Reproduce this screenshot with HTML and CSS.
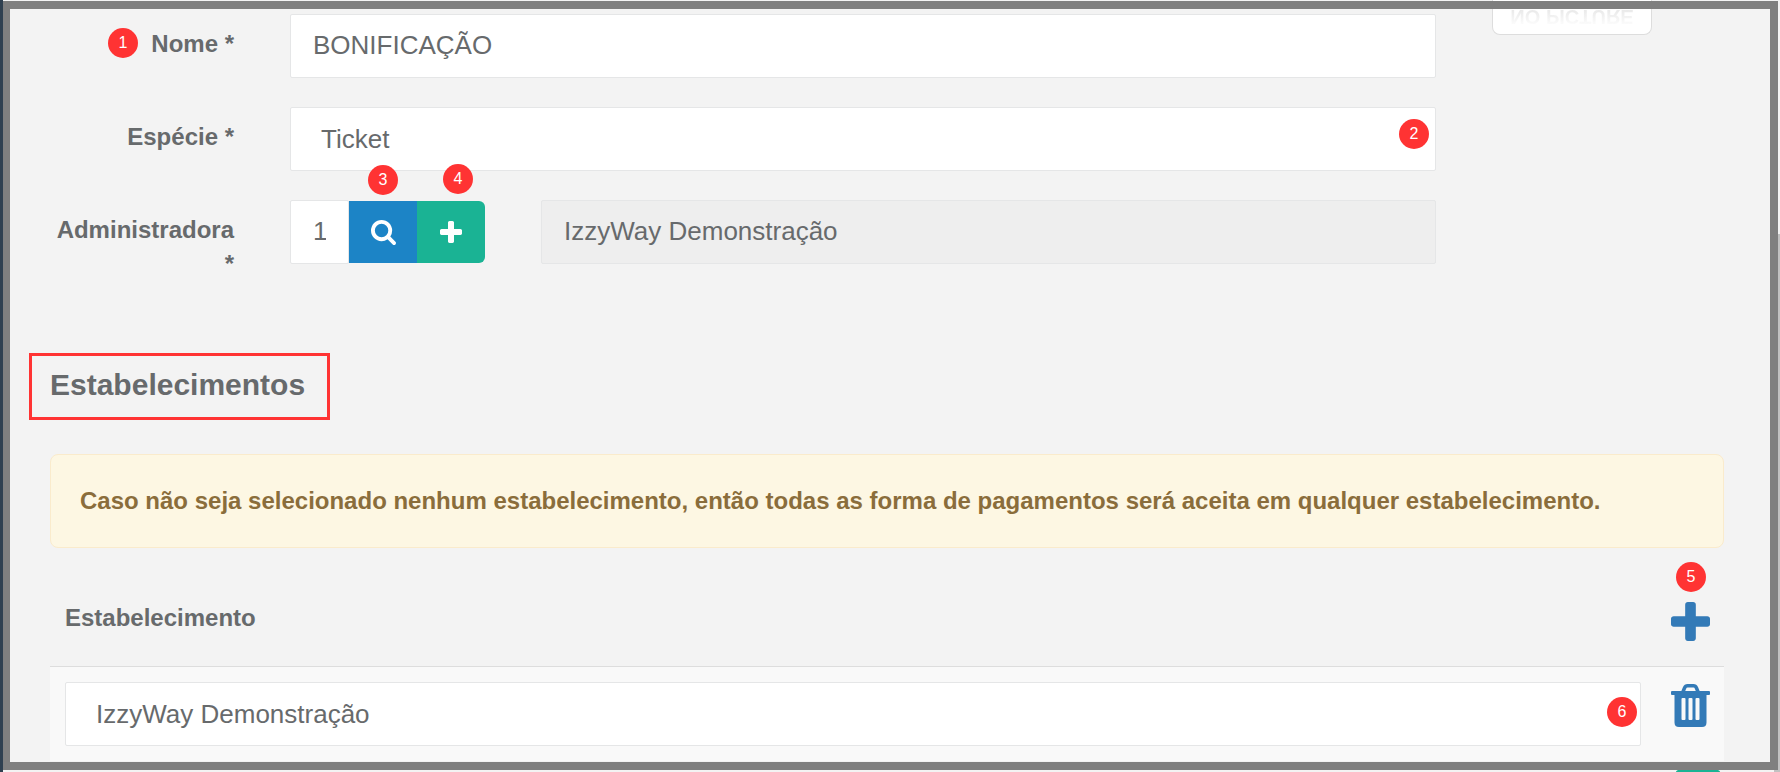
FILE: index.html
```
<!DOCTYPE html>
<html lang="pt-BR">
<head>
  <meta charset="UTF-8">
  <meta name="viewport" content="width=device-width, initial-scale=1.0">
  <title>Forma de Pagamento</title>
  <link rel="stylesheet" href="styles.css">
</head>
<body>
  <main class="page">
    <form class="form-layout">
      <div class="form-fields">
        <div class="form-row">
          <label class="form-label" for="nome"><span class="marker marker-nome">1</span>Nome *</label>
          <input class="form-control" id="nome" type="text" value="BONIFICAÇÃO">
        </div>

        <div class="form-row">
          <label class="form-label" for="especie">Espécie *</label>
          <div class="field">
            <select class="form-control" id="especie">
              <option>Ticket</option>
            </select>
            <span class="marker marker-especie">2</span>
          </div>
        </div>

        <div class="form-row">
          <label class="form-label" for="administradora">Administradora *</label>
          <div class="admin-fields">
            <div class="input-group">
              <input class="form-control" id="administradora" type="text" value="1">
              <button class="btn btn-search" type="button" aria-label="Pesquisar">
                <svg width="25" height="25" viewBox="0 0 1664 1664" aria-hidden="true"><path fill="currentColor" d="M1152 704q0-185-131.500-316.500T704 256 387.500 387.500 256 704t131.500 316.500T704 1152t316.500-131.500T1152 704zm512 832q0 52-38 90t-90 38q-54 0-90-38l-343-342q-179 124-399 124-143 0-273.500-55.500t-225-150-150-225T0 704t55.500-273.500 150-225 225-150T704 0t273.500 55.500 225 150 150 225T1408 704q0 220-124 399l343 343q37 37 37 90z"/></svg>
                <span class="marker marker-search">3</span>
              </button>
              <button class="btn btn-add" type="button" aria-label="Adicionar">
                <svg width="22" height="22" viewBox="0 0 1408 1408" aria-hidden="true"><path fill="currentColor" d="M1408 608v192q0 40-28 68t-68 28H896v416q0 40-28 68t-68 28H608q-40 0-68-28t-28-68V896H96q-40 0-68-28T0 800V608q0-40 28-68t68-28h416V96q0-40 28-68t68-28h192q40 0 68 28t28 68v416h416q40 0 68 28t28 68z"/></svg>
                <span class="marker marker-add">4</span>
              </button>
            </div>
            <input class="form-control" type="text" value="IzzyWay Demonstração" aria-label="Nome da administradora" readonly>
          </div>
        </div>
      </div>

      <div class="thumbnail"><span class="reflection">NO PICTURE</span></div>
    </form>

    <h2 class="section-title">Estabelecimentos</h2>

    <div class="alert">Caso não seja selecionado nenhum estabelecimento, então todas as forma de pagamentos será aceita em qualquer estabelecimento.</div>

    <table class="table">
      <thead>
        <tr>
          <th scope="col">Estabelecimento</th>
          <th class="action" scope="col">
            <button class="icon-btn" type="button" aria-label="Adicionar estabelecimento">
              <svg width="39" height="39" viewBox="0 0 1408 1408" aria-hidden="true"><path fill="currentColor" d="M1408 608v192q0 40-28 68t-68 28H896v416q0 40-28 68t-68 28H608q-40 0-68-28t-28-68V896H96q-40 0-68-28T0 800V608q0-40 28-68t68-28h416V96q0-40 28-68t68-28h192q40 0 68 28t28 68v416h416q40 0 68 28t28 68z"/></svg>
              <span class="marker marker-plus">5</span>
            </button>
          </th>
        </tr>
      </thead>
      <tbody>
        <tr>
          <td>
            <div class="field">
              <select class="form-control" aria-label="Estabelecimento">
                <option>IzzyWay Demonstração</option>
              </select>
              <span class="marker marker-estab">6</span>
            </div>
          </td>
          <td class="action">
            <button class="icon-btn" type="button" aria-label="Remover estabelecimento">
              <svg width="39" height="43" viewBox="0 0 39 43" aria-hidden="true">
                <path fill="none" stroke="currentColor" stroke-width="3.500" d="M11.500 9l2-5q1-2.200 3-2.200h6q2 0 3 2.200l2 5"/>
                <rect x="0" y="7" width="39" height="4" rx="1" fill="currentColor"/>
                <path fill="currentColor" fill-rule="evenodd" d="M3.500 9h32v29.500q0 4.500-4.500 4.500H8q-4.500 0-4.500-4.500zM10.500 15v20q0 1 1 1h2q1 0 1-1V15q0-1-1-1h-2q-1 0-1 1zM17.500 15v20q0 1 1 1h2q1 0 1-1V15q0-1-1-1h-2q-1 0-1 1zM24.500 15v20q0 1 1 1h2q1 0 1-1V15q0-1-1-1h-2q-1 0-1 1z"/>
              </svg>
            </button>
          </td>
        </tr>
      </tbody>
    </table>

    <button class="btn-save" type="button" aria-label="Salvar"></button>
  </main>

  <div class="scrollbar"></div>
  <div class="frame"></div>
</body>
</html>
```

FILE: styles.css
```
* {
  box-sizing: border-box;
}
body {
  font-family: 'Liberation Sans', Arial, sans-serif;
  margin: 0;
  height: 100vh;
  overflow: hidden;
  position: relative;
  background-color: #f3f3f3;
  color: #676a6c;
  font-size: 24px;
  line-height: 34px;
  border-left: 3px solid #2f4050;
}
.page {
  padding: 0 56px 0 47px;
}

/* form */
.form-layout {
  display: grid;
  grid-template-columns: 1fr 232px;
  gap: 56px;
}
.form-fields {
  display: flex;
  flex-direction: column;
  gap: 29px;
  padding-top: 14px;
}
.form-row {
  display: grid;
  grid-template-columns: 184px 1fr;
  gap: 56px;
}
.form-label {
  position: relative;
  font-weight: bold;
  text-align: right;
  padding-top: 13px;
}
.form-control {
  display: block;
  width: 100%;
  height: 64px;
  margin: 0;
  padding: 0 22px 2px;
  border: 1px solid #e5e6e7;
  border-radius: 2px;
  background-color: white;
  color: inherit;
  font-family: inherit;
  font-size: 26px;
  appearance: none;
}
select.form-control {
  padding: 0 30px;
}
.form-control[readonly] {
  background-color: #eee;
}
.field {
  position: relative;
}
.admin-fields {
  display: grid;
  grid-template-columns: 195px 1fr;
  gap: 56px;
  align-items: start;
}
.input-group {
  display: flex;
  align-items: center;
}
.input-group .form-control {
  flex: 1;
  min-width: 0;
}
.btn {
  position: relative;
  display: flex;
  align-items: center;
  justify-content: center;
  width: 68px;
  height: 62px;
  padding: 0;
  border: none;
  color: white;
  cursor: pointer;
}
.btn-search {
  background-color: #1c84c6;
}
.btn-add {
  background-color: #1ab394;
  border-radius: 0 6px 6px 0;
}
.thumbnail {
  width: 160px;
  height: 35px;
  border: 1px solid #ddd;
  border-top: none;
  border-radius: 0 0 8px 8px;
  background-color: white;
  text-align: center;
}
.reflection {
  display: block;
  transform: scaleY(-1);
  font-size: 20px;
  font-weight: bold;
  background: linear-gradient(to top, #ddd, #fff 80%);
  background-clip: text;
  color: transparent;
}

/* numbered markers */
.marker {
  position: absolute;
  width: 30px;
  height: 30px;
  border-radius: 50%;
  background-color: #f33;
  color: white;
  font-family: 'Liberation Sans', Arial, sans-serif;
  font-size: 16px;
  font-weight: normal;
  line-height: 30px;
  text-align: center;
}
.marker-nome {
  top: 14px;
  right: 96px;
}
.marker-especie {
  top: 12px;
  right: 7px;
}
.marker-search {
  top: -36px;
  left: 19px;
}
.marker-add {
  top: -37px;
  left: 26px;
}
.marker-plus {
  top: -40px;
  left: 5px;
}
.marker-estab {
  top: 15px;
  right: 4px;
}

/* establishments */
.section-title {
  width: fit-content;
  margin: 72px 0 34px -21px;
  padding: 12px 22px 15px 18px;
  border: 3px solid #f33;
  font-size: 30px;
  line-height: 34px;
}
.alert {
  padding: 29px;
  border: 1px solid #faebcc;
  border-radius: 8px;
  background-color: #fdf7e3;
  color: #8a6d3b;
  font-weight: bold;
}
.table {
  width: 100%;
  border-collapse: collapse;
}
.table th {
  height: 118px;
  padding: 22px 15px 0;
  text-align: left;
}
.table td {
  padding: 15px;
  border-top: 1px solid #ddd;
  background-color: #f9f9f9;
  vertical-align: top;
}
.table .action {
  width: 68px;
  padding-left: 15px;
  padding-right: 14px;
}
.table th.action {
  padding-top: 30px;
}
.table td.action {
  padding-top: 17px;
}
.icon-btn {
  position: relative;
  display: block;
  padding: 0;
  border: none;
  background: none;
  color: #337ab7;
  cursor: pointer;
}
.icon-btn svg {
  display: block;
}
.btn-save {
  display: block;
  width: 46px;
  height: 46px;
  margin: 8px 3px 0 auto;
  border: none;
  border-radius: 6px;
  background-color: #1ab394;
}

/* window edge */
.scrollbar {
  position: absolute;
  top: 234px;
  right: 0;
  bottom: 0;
  width: 6px;
  background-color: #c1c1c1;
}
.frame {
  position: absolute;
  top: 1px;
  right: 2px;
  bottom: 2px;
  left: -1px;
  border: 8px solid #7f7f7f;
  pointer-events: none;
}
```
